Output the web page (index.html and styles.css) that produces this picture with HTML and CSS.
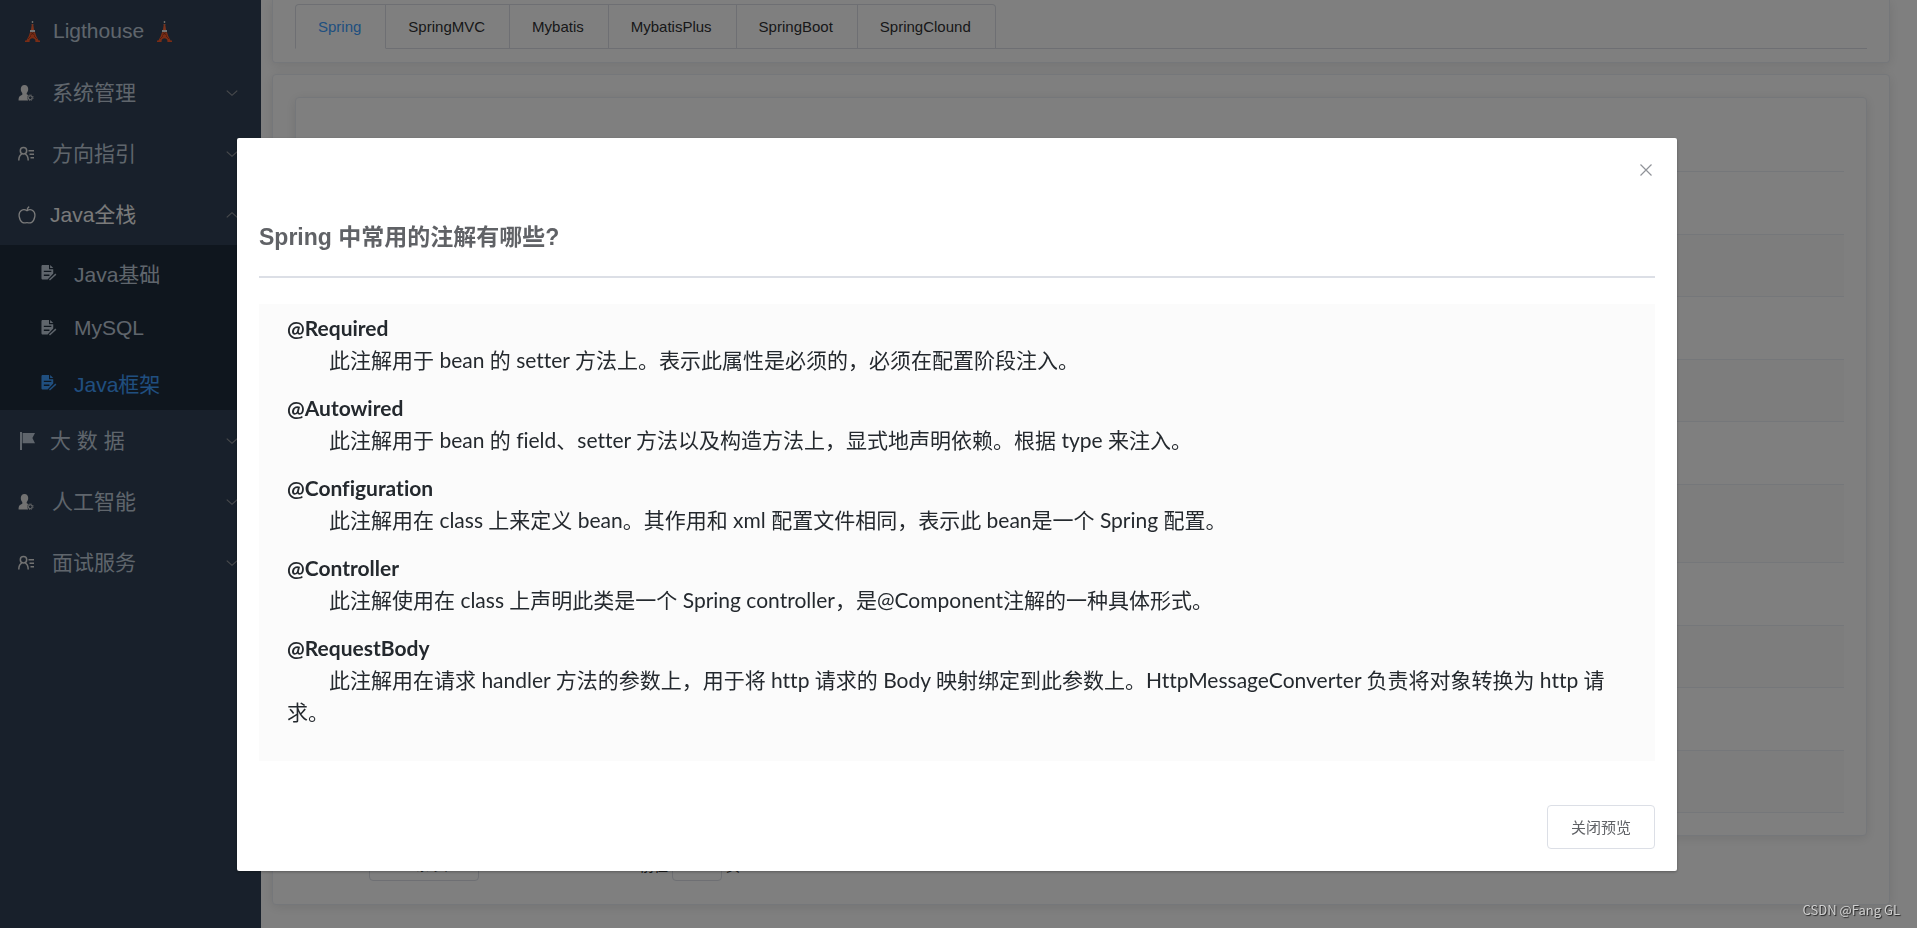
FILE: index.html
```html
<!DOCTYPE html>
<html lang="zh-CN">
<head>
<meta charset="utf-8">
<title>Ligthouse</title>
<link rel="stylesheet" href="styles.css">
</head>
<body>
<svg class="sprite" aria-hidden="true">
  <symbol id="tower" viewBox="0 0 15 21">
    <path d="M7.500 0v4" stroke="#d8d8d0" stroke-width="1.400" stroke-dasharray="2 1"/>
    <path d="M6.800 3h1.400l.8 6H6z" fill="#f4673b"/>
    <path d="M5 9h5v2.200H5z" fill="#e8e8e8"/>
    <path d="M5 11.200h5l1.300 4 2.300 4.300H15V21h-4.600v-1.200c0-1.800-1.400-2.600-2.900-2.600s-2.900.8-2.900 2.600V21H0v-1.500h1.400l2.300-4.300z" fill="#f4592a"/>
    <path d="M5 14.500l4-3M10 14.500l-4-3M3 18l3-3M12 18l-3-3" stroke="#7b2c16" stroke-width=".6"/>
  </symbol>
  <symbol id="user-gear" viewBox="0 0 16 16">
    <path d="M6.500 0C9 0 10.200 1.700 10.200 4c0 1.800-.6 3.200-1.500 4v1.200l1.500.8c-1.300 1.500-1.300 3.700 0 5.500H.6c0-3.200.6-4.700 3.700-5.800V8c-1-.8-1.500-2.200-1.500-4C2.800 1.700 4 0 6.500 0z" fill="currentColor"/>
    <circle cx="12.300" cy="12.700" r="1.900" fill="none" stroke="currentColor" stroke-width="1"/>
    <circle cx="12.300" cy="12.700" r="2.800" fill="none" stroke="currentColor" stroke-width="1" stroke-dasharray="1 1.200"/>
  </symbol>
  <symbol id="user-list" viewBox="0 0 16 16">
    <g fill="none" stroke="currentColor" stroke-width="1.500">
      <circle cx="5.500" cy="4.800" r="3.200"/>
      <path d="M.8 14.500c0-3.500 1.200-5.500 3-6.400M7.200 8.100c1.800.9 3 2.900 3 6.400M10.500 4.700H16M11.500 8.200H16M12.500 11.700H16"/>
    </g>
  </symbol>
  <symbol id="apple" viewBox="0 0 18 18">
    <path d="M9 4.700C7.500 3.700 5.500 3.200 3.700 4.200 1.500 5.400.8 8 1.200 10.700c.4 2.700 1.800 5 3.600 6 1.300.6 2.700-.1 4.200-.1s2.900.7 4.200.1c1.800-1 3.200-3.300 3.600-6 .4-2.700-.3-5.300-2.500-6.500C12.500 3.200 10.500 3.700 9 4.700z" fill="none" stroke="currentColor" stroke-width="1.300"/>
    <path d="M9 4.700C9 3 9.600 1.500 11.200.6" fill="none" stroke="currentColor" stroke-width="1.300"/>
  </symbol>
  <symbol id="flag" viewBox="0 0 18 18">
    <path d="M2 0h2v18H2zM4.600 1H17l-2.600 5 2.600 5.200H4.600z" fill="currentColor"/>
  </symbol>
  <symbol id="doc" viewBox="0 0 16 17">
    <path d="M1.500 0H8v4.500h4.500V9L6.500 15.500h-5C.6 15.500 0 15 0 14V1.500C0 .5.600 0 1.500 0zM2.500 6v1.500h8V6zm0 4.200v1.500h6v-1.500z" fill="currentColor" fill-rule="evenodd"/>
    <path d="M9.200 0l3.300 3.300H9.200z" fill="currentColor"/>
    <path d="M8.500 15.900l6.800-6.200" stroke="currentColor" stroke-width="1.500"/>
  </symbol>
  <symbol id="down" viewBox="0 0 12 12">
    <path d="M1.500 4l4.500 4 4.500-4" fill="none" stroke="currentColor" stroke-width="1"/>
  </symbol>
  <symbol id="up" viewBox="0 0 12 12">
    <path d="M1.500 8L6 4l4.500 4" fill="none" stroke="currentColor" stroke-width="1"/>
  </symbol>
  <symbol id="close" viewBox="0 0 12 12">
    <path d="M.5.500l11 11M11.500.500l-11 11" fill="none" stroke="currentColor" stroke-width="1.200"/>
  </symbol>
</svg>

<div class="app">
  <nav class="sidebar">
    <div class="logo">
      <svg class="tower"><use href="#tower"/></svg>
      <span>Ligthouse</span>
      <svg class="tower"><use href="#tower"/></svg>
    </div>
    <a class="item" href="#"><svg class="icon pale"><use href="#user-gear"/></svg><span class="label inset">系统管理</span><svg class="arrow"><use href="#down"/></svg></a>
    <a class="item" href="#"><svg class="icon pale"><use href="#user-list"/></svg><span class="label inset">方向指引</span><svg class="arrow"><use href="#down"/></svg></a>
    <a class="item open" href="#"><svg class="icon large"><use href="#apple"/></svg><span class="label">Java全栈</span><svg class="arrow"><use href="#up"/></svg></a>
    <div class="submenu">
      <a class="subitem" href="#"><svg class="icon"><use href="#doc"/></svg>Java基础</a>
      <a class="subitem" href="#"><svg class="icon"><use href="#doc"/></svg>MySQL</a>
      <a class="subitem active" href="#"><svg class="icon"><use href="#doc"/></svg>Java框架</a>
    </div>
    <a class="item" href="#"><svg class="icon large"><use href="#flag"/></svg><span class="label">大 数 据</span><svg class="arrow"><use href="#down"/></svg></a>
    <a class="item" href="#"><svg class="icon pale"><use href="#user-gear"/></svg><span class="label inset">人工智能</span><svg class="arrow"><use href="#down"/></svg></a>
    <a class="item" href="#"><svg class="icon pale"><use href="#user-list"/></svg><span class="label inset">面试服务</span><svg class="arrow"><use href="#down"/></svg></a>
  </nav>

  <main class="main">
    <section class="card tabs-card">
      <div class="tabs" role="tablist">
        <button class="tab active" role="tab">Spring</button>
        <button class="tab" role="tab">SpringMVC</button>
        <button class="tab" role="tab">Mybatis</button>
        <button class="tab" role="tab">MybatisPlus</button>
        <button class="tab" role="tab">SpringBoot</button>
        <button class="tab" role="tab">SpringClound</button>
      </div>
    </section>

    <section class="card list-card">
      <div class="card table-card">
        <table class="table">
          <thead><tr><th></th></tr></thead>
          <tbody>
            <tr><td></td></tr>
            <tr><td></td></tr>
            <tr><td></td></tr>
            <tr><td></td></tr>
            <tr><td></td></tr>
            <tr class="tall"><td></td></tr>
            <tr><td></td></tr>
            <tr><td></td></tr>
            <tr><td></td></tr>
            <tr><td></td></tr>
          </tbody>
        </table>
      </div>
      <div class="pagination">
        <select class="size" aria-label="10条/页"><option>10条/页</option></select>
        <label class="jump"><span>前往</span><input type="text" value="1"><span>页</span></label>
      </div>
    </section>
  </main>
</div>

<div class="overlay">
  <div class="dialog" role="dialog" aria-modal="true" aria-labelledby="question">
    <header class="dialog-head">
      <button class="close" aria-label="关闭"><svg><use href="#close"/></svg></button>
    </header>
    <h3 class="question" id="question">Spring 中常用的注解有哪些?</h3>
    <article class="answer">
      <p><strong>@Required</strong><span class="text">此注解用于 bean 的 setter 方法上。表示此属性是必须的，必须在配置阶段注入。</span></p>
      <p><strong>@Autowired</strong><span class="text">此注解用于 bean 的 field、setter 方法以及构造方法上，显式地声明依赖。根据 type 来注入。</span></p>
      <p><strong>@Configuration</strong><span class="text">此注解用在 class 上来定义 bean。其作用和 xml 配置文件相同，表示此 bean是一个 Spring 配置。</span></p>
      <p><strong>@Controller</strong><span class="text">此注解使用在 class 上声明此类是一个 Spring controller，是@Component注解的一种具体形式。</span></p>
      <p><strong>@RequestBody</strong><span class="text">此注解用在请求 handler 方法的参数上，用于将 http 请求的 Body 映射绑定到此参数上。HttpMessageConverter 负责将对象转换为 http 请求。</span></p>
    </article>
    <footer class="dialog-foot">
      <button class="button">关闭预览</button>
    </footer>
  </div>
</div>
<div class="watermark">CSDN @Fang GL</div>
</body>
</html>
```
FILE: styles.css
```css
* {
  box-sizing: border-box;
}

body {
  margin: 0;
  background: #fff;
  color: #303133;
  font-family: "Liberation Sans", "Noto Sans CJK SC", sans-serif;
  font-size: 15px;
}

button,
input,
select {
  font: inherit;
  color: inherit;
}

a {
  color: inherit;
  text-decoration: none;
}

.sprite {
  display: none;
}

.app {
  display: flex;
  height: 100vh;
  overflow: hidden;
}

/* Sidebar */
.sidebar {
  flex: 0 0 261px;
  background: #304156;
  color: #bfcbd9;
  font-size: 21px;
}

.logo {
  display: flex;
  align-items: center;
  gap: 13px;
  height: 62px;
  padding: 0 25px;
}

.tower {
  width: 15px;
  height: 21px;
}

.item {
  display: flex;
  align-items: center;
  height: 61px;
  padding: 0 22px 0 18px;
}

.item.open {
  color: #f4f4f5;
}

.icon {
  flex: none;
  width: 16px;
  height: 16px;
}

.icon.large {
  width: 18px;
  height: 18px;
}

.icon.pale {
  color: #e4e4e4;
}

.label {
  flex: 1;
  margin-left: 14px;
  padding-bottom: 3px;
}

.label.inset {
  margin-left: 18px;
}

.arrow {
  width: 14px;
  height: 14px;
  color: #909399;
}

.submenu {
  background: #1f2d3d;
}

.subitem {
  display: flex;
  align-items: center;
  gap: 17px;
  height: 55px;
  padding-left: 41px;
}

.subitem.active {
  color: #409eff;
}

/* Content */
.main {
  flex: 1;
  min-width: 0;
  padding: 0 27px 22px 11px;
}

.card {
  border: 1px solid #ebeef5;
  border-radius: 4px;
  background: #fff;
  box-shadow: 0 2px 12px rgba(0, 0, 0, 0.1);
}

.tabs-card {
  padding: 3px 22px 13px;
  border-top: 0;
  border-radius: 0 0 4px 4px;
}

.tabs {
  display: flex;
  height: 46px;
  padding-top: 1px;
  border-bottom: 1px solid #dcdfe6;
}

.tab {
  height: 45px;
  padding: 0 24px 0 22px;
  border: 1px solid #dcdfe6;
  border-left-width: 0;
  background: #fff;
}

.tab:first-child {
  border-left-width: 1px;
  border-top-left-radius: 4px;
}

.tab:last-child {
  border-top-right-radius: 4px;
}

.tab.active {
  border-bottom-color: #fff;
  color: #409eff;
}

.list-card {
  margin-top: 11px;
  padding: 22px;
}

.table-card {
  padding: 22px;
}

.table {
  width: 100%;
  border-collapse: separate;
  border-spacing: 0;
}

.table th,
.table td {
  height: 63px;
  padding: 0;
  border-bottom: 1px solid #ebeef5;
}

.table th {
  height: 52px;
}

.table tr:nth-child(even) td {
  height: 62px;
  background: #fafafa;
}

.table tr.tall:nth-child(even) td {
  height: 78px;
}

.pagination {
  display: flex;
  align-items: center;
  gap: 161px;
  padding: 17px 74px 1px;
  font-size: 14px;
}

.size {
  width: 110px;
  height: 28px;
  padding: 0 0 4px;
  border: 1px solid #dcdfe6;
  border-radius: 4px;
  appearance: none;
  background: #fff;
  text-align: center;
}

.jump {
  display: flex;
  align-items: center;
  gap: 4px;
}

.jump span {
  padding-bottom: 4px;
}

.jump input {
  width: 50px;
  height: 28px;
  padding: 0 0 2px;
  border: 1px solid #dcdfe6;
  border-radius: 4px;
  text-align: center;
}

/* Dialog */
.overlay {
  position: fixed;
  inset: 0;
  padding: 138px 240px 56px 237px;
  background: rgba(0, 0, 0, 0.5);
}

.dialog {
  padding: 22px;
  border-radius: 2px;
  background: #fff;
  box-shadow: 0 1px 3px rgba(0, 0, 0, 0.3);
}

.dialog-head {
  display: flex;
  justify-content: flex-end;
}

.close {
  display: flex;
  padding: 4px 3px;
  border: 0;
  background: none;
  color: #909399;
}

.close svg {
  width: 12px;
  height: 12px;
}

.question {
  margin: 39px 0 26px;
  padding-bottom: 21px;
  border-bottom: 2px solid #dcdfe6;
  color: #606266;
  font-size: 23px;
  line-height: 36px;
}

.answer {
  padding: 8px 28px 17px;
  background: #fbfbfb;
  color: #24292e;
  font-family: Lato, "Noto Sans CJK SC", sans-serif;
  font-size: 21px;
  font-variant-ligatures: none;
  line-height: 32px;
}

.answer p {
  margin: 0 0 16px;
}

.answer strong {
  display: block;
  font-weight: 700;
}

.text {
  display: block;
  text-indent: 2em;
}

.dialog-foot {
  display: flex;
  justify-content: flex-end;
  margin-top: 44px;
}

.button {
  height: 44px;
  padding: 0 23px 2px;
  border: 1px solid #dcdfe6;
  border-radius: 4px;
  background: #fff;
  color: #606266;
}

.watermark {
  position: fixed;
  right: 17px;
  bottom: 9px;
  color: #d0d0d0;
  font-family: "Noto Sans CJK SC", sans-serif;
  font-size: 13px;
  line-height: 18px;
  text-shadow: 1px 1px 1px #222;
}
```
